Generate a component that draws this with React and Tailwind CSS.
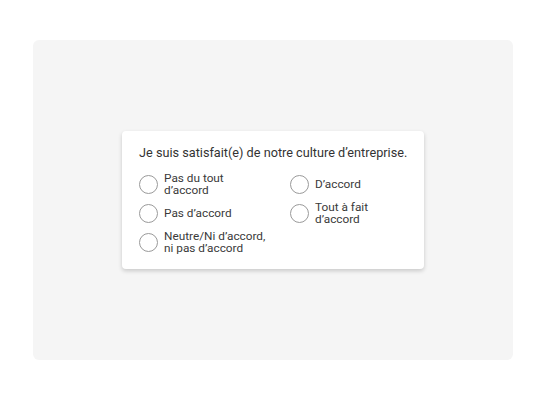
export default function App() {
  const opts = [
    ["Pas du tout", "d’accord"],
    ["D’accord"],
    ["Pas d’accord"],
    ["Tout à fait", "d’accord"],
    ["Neutre/Ni d’accord,", "ni pas d’accord"],
  ];
  return (
    <div className="w-[546px] h-[400px] bg-white flex items-center justify-center" style={{ fontFamily: 'Roboto, "Liberation Sans", sans-serif' }}>
      <div className="w-[480px] h-[320px] bg-[#f5f5f5] rounded-[6px] flex items-center justify-center">
        <div className="w-[302px] bg-white rounded-[4px] shadow-[0_2px_4px_rgba(0,0,0,0.18)] pl-[17px] pr-[8px] pt-[13px] pb-[15px]">
          <div className="text-[12.7px] leading-[18px] text-[#333] whitespace-nowrap">Je suis satisfait(e) de notre culture d’entreprise.</div>
          <div className="grid grid-cols-[151px_1fr] gap-y-[5px] mt-[10px]">
            {opts.map((o, i) => (
              <div key={i} className="flex items-center h-[24px]">
                <div className="w-[19px] h-[19px] rounded-full border border-[#9a9a9a] bg-white shrink-0" />
                <div className="ml-[6px] text-[11.8px] leading-[12px] text-[#3a3a3a] whitespace-nowrap">
                  {o.map((l, j) => (
                    <div key={j}>{l}</div>
                  ))}
                </div>
              </div>
            ))}
          </div>
        </div>
      </div>
    </div>
  );
}
